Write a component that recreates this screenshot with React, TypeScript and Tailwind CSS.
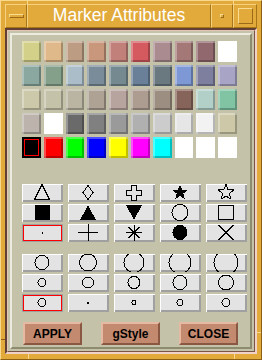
import React from "react";

const swatches = [
  "#d3d08a", "#e0b98a", "#bd9c84", "#c9977c", "#c1807a", "#d45a60", "#a98b90", "#a57878", "#91686e", "#ffffff",
  "#8aa8a0", "#84a08a", "#abbdc8", "#7a8c9a", "#758a90", "#6a8098", "#6a7880", "#7e98d6", "#7e7e9e", "#a8a4c6",
  "#ccc8aa", "#c4c2a8", "#bab4a2", "#ada294", "#b8a49e", "#ad9c90", "#9c8e80", "#86645a", "#b2d0c8", "#80c4a4",
  "#bcb4ac", "#ffffff", "#6a6a6a", "#808080", "#9a9a9a", "#b0b0b0", "#cccccc", "#e6e6e6", "#f2f2f2", "#cdc8a8",
  "#000000", "#ff0000", "#00ff00", "#0000ff", "#ffff00", "#ff00ff", "#00ffff", "#ffffff", "#ffffff", "#ffffff",
];

const star = "20,0.5 22.1,5.7 27.6,6 23.3,9.6 24.7,15 20,12 15.3,15 16.7,9.6 12.4,6 17.9,5.7";
const cross = "17.5,1 22.5,1 22.5,6 27.5,6 27.5,11 22.5,11 22.5,16 17.5,16 17.5,11 12.5,11 12.5,6 17.5,6";

// marker shapes, drawn in a 41x18 box centred on (20, 8.5)
const markers: React.ReactNode[] = [
  <polygon points="20,0.5 27.5,15.5 12.5,15.5" fill="none" stroke="black" />,
  <polygon points="20,1.5 25,8.5 20,15.5 15,8.5" fill="none" stroke="black" />,
  <polygon points={cross} fill="none" stroke="black" />,
  <polygon points={star} fill="black" />,
  <polygon points={star} fill="none" stroke="black" />,
  <rect x="12.5" y="1" width="15" height="15" fill="black" />,
  <polygon points="20,1.5 28,16 12,16" fill="black" />,
  <polygon points="12,1 28,1 20,16" fill="black" />,
  <circle cx="20" cy="8.5" r="8" fill="none" stroke="black" />,
  <rect x="12.5" y="1.5" width="15" height="14" fill="none" stroke="black" />,
  <rect x="19.5" y="8" width="1.5" height="1.5" fill="black" />,
  <g stroke="black">
    <line x1="10" y1="8.5" x2="30" y2="8.5" />
    <line x1="20" y1="0" x2="20" y2="17" />
  </g>,
  <g stroke="black">
    <line x1="12" y1="8.5" x2="28" y2="8.5" />
    <line x1="20" y1="0.5" x2="20" y2="16.5" />
    <line x1="14.5" y1="3" x2="25.5" y2="14" />
    <line x1="25.5" y1="3" x2="14.5" y2="14" />
  </g>,
  <circle cx="20" cy="8.5" r="7.5" fill="black" />,
  <g stroke="black">
    <line x1="12.5" y1="1" x2="27.5" y2="16" />
    <line x1="27.5" y1="1" x2="12.5" y2="16" />
  </g>,
];

const sizes = [15, 18, 21, 23, 25, 9, 12, 13, 15, 16, 9, 2, 5, 7, 9];

const Btn = ({ selected, children }: { selected?: boolean; children: React.ReactNode }) => (
  <div
    className={
      "w-[41px] h-[18px] bg-[#e3e3e3] overflow-hidden flex items-center justify-center " +
      (selected
        ? "shadow-[inset_0_0_0_1px_#a0a0a0,inset_0_0_0_2px_#ff0000]"
        : "shadow-[inset_1px_1px_0_#ffffff,inset_-2px_-2px_0_#a0a0a0]")
    }
  >
    <svg width="41" height="18" viewBox="0 0 41 18" shapeRendering="crispEdges">
      {children}
    </svg>
  </div>
);

const Action = ({ label }: { label: string }) => (
  <div className="w-[59px] h-[23px] flex items-center justify-center bg-[#c38a6f] border-2 border-t-[#e6b9a2] border-l-[#e6b9a2] border-b-[#8a5842] border-r-[#8a5842] text-[12px] font-bold text-black">
    {label}
  </div>
);

const seg = "border border-t-[#f6d27e] border-l-[#f6d27e] border-b-[#a87418] border-r-[#a87418]";

export default function App() {
  return (
    <div className="relative w-[262px] h-[360px] flex flex-col bg-[#e2aa3a] border border-t-[#f8d88c] border-l-[#f8d88c] border-b-[#8c6014] border-r-[#8c6014] pt-[3px] px-[4px] pb-[5px] font-['Liberation_Sans',Arial,sans-serif]">
      {/* frame corner marks */}
      <div className="absolute top-0 left-[26px] w-[1px] h-[4px] bg-[#f8d88c]" />
      <div className="absolute top-0 left-[232px] w-[1px] h-[4px] bg-[#f8d88c]" />
      <div className="absolute bottom-0 left-[27px] w-[1px] h-[5px] bg-[#f8d88c]" />
      <div className="absolute bottom-0 left-[233px] w-[1px] h-[5px] bg-[#f8d88c]" />
      <div className="absolute left-0 top-[338px] w-[4px] h-[1px] bg-[#8c6014]" />
      <div className="absolute right-0 top-[331px] w-[4px] h-[1px] bg-[#f8d88c]" />

      {/* title bar */}
      <div className="flex h-[24px] shrink-0">
        <div className={"w-[22px] flex items-center justify-center " + seg}>
          <div className="w-[15px] h-[4px] border border-t-[#f8dc94] border-l-[#f8dc94] border-b-[#9a6a18] border-r-[#9a6a18]" />
        </div>
        <div className={"flex-1 flex items-center justify-center text-white text-[17.5px] leading-none pb-[1px] " + seg}>
          Marker Attributes
        </div>
        <div className={"w-[22px] flex items-center justify-center " + seg}>
          <div className="w-[4px] h-[4px] border border-t-[#f8dc94] border-l-[#f8dc94] border-b-[#9a6a18] border-r-[#9a6a18]" />
        </div>
        <div className={"w-[24px] flex items-center justify-center " + seg}>
          <div className="w-[15px] h-[16px] border border-t-[#f8dc94] border-l-[#f8dc94] border-b-[#9a6a18] border-r-[#9a6a18]" />
        </div>
      </div>

      {/* client area */}
      <div className="flex-1 flex flex-col border-2 border-t-[#634034] border-l-[#634034] border-b-[#f0d2c8] border-r-[#f0d2c8]">
        <div className="flex-1 flex flex-col border border-t-[#e4c4b8] border-l-[#e4c4b8] border-b-[#7a5444] border-r-[#7a5444] bg-[#c5c2aa] p-[2px]">
          <div className="flex-1 flex flex-col bg-[#c5c2aa] border-2 border-t-[#ecebdf] border-l-[#ecebdf] border-b-[#8e8c6e] border-r-[#8e8c6e]">
            {/* colour swatches */}
            <div className="mt-[6px] ml-[10px] w-[215px] grid grid-cols-10 gap-x-[3px] gap-y-[3px]">
              {swatches.map((c, i) => (
                <div
                  key={i}
                  className={
                    "h-[21px] " +
                    (c === "#ffffff" || c === "#000000"
                      ? ""
                      : "shadow-[inset_2px_2px_0_rgba(255,255,255,0.3),inset_-2px_-2px_0_rgba(0,0,0,0.25)]") +
                    (i === 40 ? " p-[2px]" : "")
                  }
                  style={{ backgroundColor: c }}
                >
                  {i === 40 && <div className="h-full border border-[#ff0000]" />}
                </div>
              ))}
            </div>

            {/* marker styles */}
            <div className="mt-[26px] ml-[10px] grid grid-cols-[repeat(5,41px)] gap-x-[5px] gap-y-[2px]">
              {markers.map((m, i) => (
                <Btn key={i} selected={i === 10}>
                  {m}
                </Btn>
              ))}
            </div>

            {/* marker sizes */}
            <div className="mt-[12px] ml-[10px] grid grid-cols-[repeat(5,41px)] gap-x-[5px] gap-y-[2px]">
              {sizes.map((d, i) => (
                <Btn key={i} selected={i === 10}>
                  {d <= 2 ? (
                    <rect x="19" y="7.5" width="2" height="2" fill="black" />
                  ) : (
                    <circle cx="20" cy="8.5" r={d / 2 - 0.5} fill="none" stroke="black" />
                  )}
                </Btn>
              ))}
            </div>

            <div className="mt-[10px] ml-[11px] w-[215px] flex justify-between">
              <Action label="APPLY" />
              <Action label="gStyle" />
              <Action label="CLOSE" />
            </div>
          </div>
        </div>
      </div>
    </div>
  );
}
